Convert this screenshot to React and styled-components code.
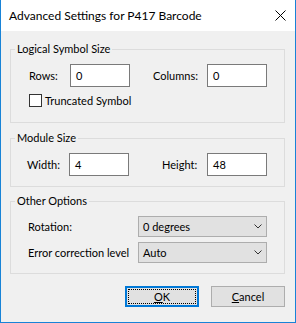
import React from 'react'
import styled, { createGlobalStyle } from 'styled-components'

const GlobalStyle = createGlobalStyle`
  html, body {
    margin: 0;
    padding: 0;
    background: #f0f0f0;
  }
  body {
    font-family: Lato, "Liberation Sans", sans-serif;
    font-size: 11px;
    color: #000;
  }
  * { box-sizing: border-box; }
`

const Window = styled.div`
  width: 296px;
  height: 323px;
  display: flex;
  flex-direction: column;
  background: #f0f0f0;
  border: 1px solid #1883d7;
  border-top: none;
`

const TitleBar = styled.div`
  height: 31px;
  flex: none;
  display: flex;
  align-items: center;
  justify-content: space-between;
  padding: 0 9px 0 8px;
  background: #fff;
`

const Title = styled.span`
  font-size: 12px;
  white-space: nowrap;
`

const CloseButton = styled.button`
  display: flex;
  align-items: center;
  justify-content: center;
  width: 11px;
  height: 11px;
  padding: 0;
  border: none;
  background: none;
`

const Body = styled.div`
  flex: 1;
  display: flex;
  flex-direction: column;
  padding: 10px 10px 0 9px;
`

const Group = styled.fieldset`
  margin: ${p => p.$top || 0}px 0 0 0;
  padding: 0 4px;
  border: 1px solid #dcdcdc;
  min-width: 0;
`

const Legend = styled.legend`
  padding: 0 2px;
  line-height: 16px;
  white-space: nowrap;
`

const GroupInner = styled.div`
  display: flex;
  flex-direction: column;
  gap: ${p => p.$gap || 0}px;
  padding: 7px 0 ${p => p.$bottom}px ${p => p.$left}px;
`

const Row = styled.div`
  display: flex;
  align-items: center;
`

const Label = styled.label`
  flex: none;
  width: ${p => p.$w}px;
  margin-left: ${p => p.$ml || 0}px;
  white-space: nowrap;
`

const TextBox = styled.div`
  flex: none;
  width: 60px;
  height: 23px;
  display: flex;
  align-items: center;
  padding-left: 5px;
  background: #fff;
  border: 1px solid #7a7a7a;
`

const Check = styled.span`
  flex: none;
  width: 13px;
  height: 13px;
  margin-right: 3px;
  background: #fff;
  border: 1px solid #333;
`

const Combo = styled.div`
  flex: none;
  width: 129px;
  height: 21px;
  display: flex;
  align-items: center;
  justify-content: space-between;
  padding: 0 4px 0 4px;
  background: #e1e1e1;
  border: 1px solid #adadad;
`

const Buttons = styled.div`
  display: flex;
  justify-content: flex-end;
  gap: 12px;
  margin-top: 12px;
`

const Button = styled.button`
  width: 74px;
  height: 21px;
  display: flex;
  padding: 0;
  font: inherit;
  color: #000;
  background: #e1e1e1;
  border: ${p => (p.$default ? '2px solid #0078d7' : '1px solid #adadad')};
`

const FocusRect = styled.span`
  flex: 1;
  display: flex;
  align-items: center;
  justify-content: center;
  margin: ${p => (p.$focus ? 1 : 2)}px;
  border: 1px ${p => (p.$focus ? 'dotted #000' : 'solid transparent')};
`

const Chevron = () => (
  <svg width='8' height='5' viewBox='0 0 8 5'>
    <polyline points='0.5,0.5 4,4 7.5,0.5' fill='none' stroke='#333' strokeWidth='1' />
  </svg>
)

const App = () => {
  return (
    <Window>
      <GlobalStyle />
      <TitleBar>
        <Title>Advanced Settings for P417 Barcode</Title>
        <CloseButton aria-label='Close'>
          <svg width='11' height='11' viewBox='0 0 11 11'>
            <path d='M0.5 0.5 L10.5 10.5 M10.5 0.5 L0.5 10.5' stroke='#000' strokeWidth='1' />
          </svg>
        </CloseButton>
      </TitleBar>
      <Body>
        <Group>
          <Legend>Logical Symbol Size</Legend>
          <GroupInner $left={14} $bottom={15} $gap={7}>
            <Row>
              <Label $w={41}>Rows:</Label>
              <TextBox>0</TextBox>
              <Label $w={54} $ml={23}>Columns:</Label>
              <TextBox>0</TextBox>
            </Row>
            <Row>
              <Check />
              <span>Truncated Symbol</span>
            </Row>
          </GroupInner>
        </Group>

        <Group $top={7}>
          <Legend>Module Size</Legend>
          <GroupInner $left={12} $bottom={10}>
            <Row>
              <Label $w={42}>Width:</Label>
              <TextBox>4</TextBox>
              <Label $w={45} $ml={33}>Height:</Label>
              <TextBox>48</TextBox>
            </Row>
          </GroupInner>
        </Group>

        <Group $top={6}>
          <Legend>Other Options</Legend>
          <GroupInner $left={13} $bottom={10} $gap={5}>
            <Row>
              <Label $w={110}>Rotation:</Label>
              <Combo>
                <span>0 degrees</span>
                <Chevron />
              </Combo>
            </Row>
            <Row>
              <Label $w={110}>Error correction level</Label>
              <Combo>
                <span>Auto</span>
                <Chevron />
              </Combo>
            </Row>
          </GroupInner>
        </Group>

        <Buttons>
          <Button $default>
            <FocusRect $focus><span><u>O</u>K</span></FocusRect>
          </Button>
          <Button>
            <FocusRect><span><u>C</u>ancel</span></FocusRect>
          </Button>
        </Buttons>
      </Body>
    </Window>
  )
}

export default App
